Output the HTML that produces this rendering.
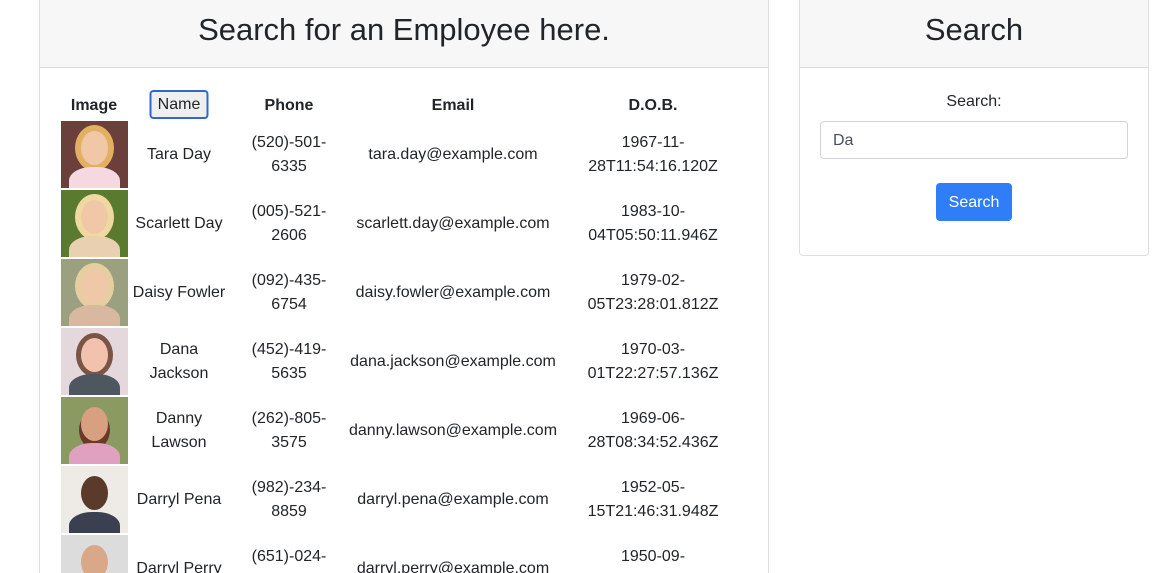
<!DOCTYPE html>
<html style="overflow:hidden;height:573px"><head><meta charset="utf-8"><style>
*{box-sizing:border-box;margin:0;padding:0}
body{width:1169px;height:573px;overflow:hidden;background:#fff;font-family:"Liberation Sans",Arial,sans-serif;color:#212529;font-size:16px;line-height:24px;position:relative}
.card{position:absolute;border:1px solid #dfdfdf;border-radius:4px;background:#fff}
.hdr{position:absolute;left:0;right:0;top:0;background:#f7f7f7;border-bottom:1px solid #dcdcdc;text-align:center;font-size:31px}
.c{position:absolute;text-align:center;white-space:nowrap;transform:translateX(-50%)}
.th{font-weight:bold;top:93px}
.img{position:absolute;left:61px;width:67px;height:67px;overflow:hidden}
.img i{position:absolute;left:20px;top:10px;width:27px;height:34px;border-radius:50%;background:#e8b99c}
.img b{position:absolute;left:8px;top:46px;width:51px;height:30px;border-radius:45% 45% 0 0}
</style></head><body>
<div class="card" style="left:39px;top:-5px;width:730px;height:700px">
<div class="hdr" style="height:72px;line-height:68px">Search for an Employee here.</div>
</div>
<div class="card" style="left:799px;top:-5px;width:350px;height:261px">
<div class="hdr" style="height:72px;line-height:68px">Search</div>
<div style="position:absolute;left:0;right:0;top:94px;text-align:center">Search:</div>
<div style="position:absolute;left:20px;width:308px;top:125px;height:38px;border:1px solid #ced4da;border-radius:4px;padding:7px 12px;color:#495057">Da</div>
<div style="position:absolute;left:136px;top:187px;width:76px;height:38px;background:#2f7ef8;border-radius:4px;color:#fff;text-align:center;line-height:39px">Search</div>
</div>

<div class="c th" style="left:94px;top:94px">Image</div>
<div class="c" style="left:179px;top:90px;width:59px;height:29px;border:2px solid #2f66d0;border-radius:4px;background:#efefef;line-height:25px">Name</div>
<div class="c th" style="left:289px;top:94px">Phone</div>
<div class="c th" style="left:453px;top:94px">Email</div>
<div class="c th" style="left:653px;top:94px">D.O.B.</div>

<div class="img" style="top:121px;background:#6b3f3a"><i style="background:#f0c8a8;box-shadow:0 0 0 6px #e2b060"></i><b style="background:#f5d8e0"></b></div>
<div class="img" style="top:190px;background:#5a7a30"><i style="background:#f0c8a8;box-shadow:0 0 0 6px #f0d9a0"></i><b style="background:#e9d0b0"></b></div>
<div class="img" style="top:259px;background:#9aa080"><i style="background:#f0c8a8;box-shadow:0 0 0 6px #e5cfa0"></i><b style="background:#d8b8a0"></b></div>
<div class="img" style="top:328px;background:#e4d8dc"><i style="background:#f2c2ae;box-shadow:0 0 0 5px #7a5545"></i><b style="background:#4e5660"></b></div>
<div class="img" style="top:397px;background:#8a9a60"><i style="background:#d8a080;box-shadow:0 6px 0 2px #6a3a28"></i><b style="background:#e0a0c0"></b></div>
<div class="img" style="top:466px;background:#eeeae6"><i style="background:#5a3a2a"></i><b style="background:#3a4050"></b></div>
<div class="img" style="top:535px;background:#dcdcdc"><i style="background:#d8a888"></i><b style="background:#7090a0"></b></div>

<div class="c" style="left:179px;top:143px">Tara Day</div>
<div class="c" style="left:289px;top:131px">(520)-501-<br>6335</div>
<div class="c" style="left:453px;top:143px">tara.day@example.com</div>
<div class="c" style="left:653px;top:131px">1967-11-<br>28T11:54:16.120Z</div>

<div class="c" style="left:179px;top:212px">Scarlett Day</div>
<div class="c" style="left:289px;top:200px">(005)-521-<br>2606</div>
<div class="c" style="left:453px;top:212px">scarlett.day@example.com</div>
<div class="c" style="left:653px;top:200px">1983-10-<br>04T05:50:11.946Z</div>

<div class="c" style="left:179px;top:281px">Daisy Fowler</div>
<div class="c" style="left:289px;top:269px">(092)-435-<br>6754</div>
<div class="c" style="left:453px;top:281px">daisy.fowler@example.com</div>
<div class="c" style="left:653px;top:269px">1979-02-<br>05T23:28:01.812Z</div>

<div class="c" style="left:179px;top:338px">Dana<br>Jackson</div>
<div class="c" style="left:289px;top:338px">(452)-419-<br>5635</div>
<div class="c" style="left:453px;top:350px">dana.jackson@example.com</div>
<div class="c" style="left:653px;top:338px">1970-03-<br>01T22:27:57.136Z</div>

<div class="c" style="left:179px;top:407px">Danny<br>Lawson</div>
<div class="c" style="left:289px;top:407px">(262)-805-<br>3575</div>
<div class="c" style="left:453px;top:419px">danny.lawson@example.com</div>
<div class="c" style="left:653px;top:407px">1969-06-<br>28T08:34:52.436Z</div>

<div class="c" style="left:179px;top:488px">Darryl Pena</div>
<div class="c" style="left:289px;top:476px">(982)-234-<br>8859</div>
<div class="c" style="left:453px;top:488px">darryl.pena@example.com</div>
<div class="c" style="left:653px;top:476px">1952-05-<br>15T21:46:31.948Z</div>

<div class="c" style="left:179px;top:557px">Darryl Perry</div>
<div class="c" style="left:289px;top:545px">(651)-024-<br>0000</div>
<div class="c" style="left:453px;top:557px">darryl.perry@example.com</div>
<div class="c" style="left:653px;top:545px">1950-09-<br>00T00:00:00.000Z</div>
</body></html>
